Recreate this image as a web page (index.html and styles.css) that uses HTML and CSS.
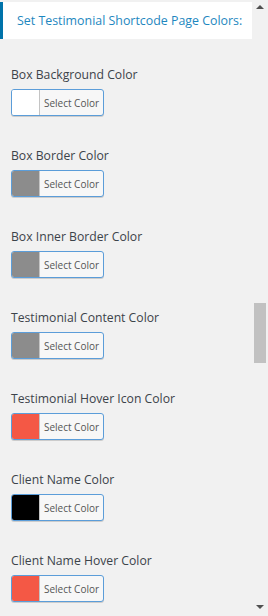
FILE: index.html
```html
<!DOCTYPE html>
<html>
<head>
<meta charset="utf-8">
<link rel="stylesheet" href="styles.css">
</head>
<body>
<div class="frame">
  <main class="content">
    <div class="header"><h2 class="title">Set Testimonial Shortcode Page Colors:</h2></div>
    <div class="field">
      <label class="label">Box Background Color</label>
      <button class="picker"><span class="swatch sw-white"></span><span class="picker-text">Select Color</span></button>
    </div>
    <div class="field">
      <label class="label">Box Border Color</label>
      <button class="picker"><span class="swatch sw-gray"></span><span class="picker-text">Select Color</span></button>
    </div>
    <div class="field">
      <label class="label">Box Inner Border Color</label>
      <button class="picker"><span class="swatch sw-gray"></span><span class="picker-text">Select Color</span></button>
    </div>
    <div class="field">
      <label class="label">Testimonial Content Color</label>
      <button class="picker"><span class="swatch sw-gray"></span><span class="picker-text">Select Color</span></button>
    </div>
    <div class="field">
      <label class="label">Testimonial Hover Icon Color</label>
      <button class="picker"><span class="swatch sw-red"></span><span class="picker-text">Select Color</span></button>
    </div>
    <div class="field">
      <label class="label">Client Name Color</label>
      <button class="picker"><span class="swatch sw-black"></span><span class="picker-text">Select Color</span></button>
    </div>
    <div class="field">
      <label class="label">Client Name Hover Color</label>
      <button class="picker"><span class="swatch sw-red"></span><span class="picker-text">Select Color</span></button>
    </div>
  </main>
  <div class="scrollbar">
    <span class="arrow arrow-up"></span>
    <span class="track"><span class="thumb"></span></span>
    <span class="arrow arrow-down"></span>
  </div>
</div>
</body>
</html>
```
FILE: styles.css
```css
html, body {
  margin: 0;
  padding: 0;
  background: #f1f1f1;
}
body {
  font-family: "Open Sans", "Noto Sans", sans-serif;
  width: 268px;
  height: 616px;
  overflow: hidden;
}
.frame {
  display: flex;
  height: 616px;
}
.content {
  width: 252px;
  flex: none;
}
.header {
  margin-top: 2px;
  height: 37px;
  background: #fff;
  border-left: 3px solid #0073aa;
  display: flex;
  align-items: center;
  padding-left: 14px;
}
.title {
  margin: 0;
  font-size: 12.4px;
  font-weight: 500;
  color: #1e87c0;
  white-space: nowrap;
}
.field {
  display: flex;
  flex-direction: column;
  align-items: flex-start;
  padding-left: 11px;
}
.header + .field { margin-top: 28px; }
.field + .field { margin-top: 32px; }
.label {
  font-size: 12.2px;
  font-weight: 500;
  color: #3c434a;
  line-height: 16px;
  height: 16px;
  white-space: nowrap;
}
.picker {
  margin-top: 6px;
  display: flex;
  align-items: stretch;
  height: 27px;
  width: 93px;
  padding: 0;
  border: 1px solid #5b9dd9;
  border-radius: 3px;
  background: #f7f7f7;
  box-shadow: 0 1px 0 #ccc;
  overflow: hidden;
  font-family: inherit;
}
.swatch {
  width: 27px;
  flex: none;
  border-right: 1px solid #c4c4c4;
}
.sw-white { background: #fff; }
.sw-gray { background: #8c8c8c; }
.sw-red { background: #f45845; }
.sw-black { background: #000; }
.picker-text {
  flex: 1;
  display: flex;
  align-items: center;
  justify-content: center;
  font-size: 10px;
  color: #555;
  white-space: nowrap;
}
.scrollbar {
  width: 16px;
  flex: none;
  display: flex;
  flex-direction: column;
  align-items: center;
  background: #f1f1f1;
}
.arrow {
  width: 0;
  height: 0;
  border-left: 4px solid transparent;
  border-right: 4px solid transparent;
  flex: none;
}
.arrow-up {
  margin-top: 5px;
  border-bottom: 4px solid #505050;
}
.arrow-down {
  margin-bottom: 7px;
  border-top: 4px solid #505050;
}
.track {
  flex: 1;
  width: 100%;
  display: flex;
  flex-direction: column;
  align-items: center;
  padding-top: 294px;
}
.thumb {
  width: 12px;
  height: 60px;
  background: #c1c1c1;
}
```
